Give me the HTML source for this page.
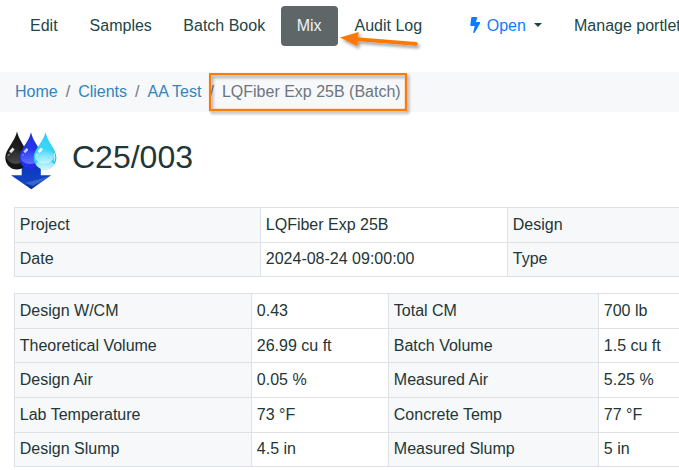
<!DOCTYPE html>
<html><head><meta charset="utf-8">
<style>
*{box-sizing:border-box;margin:0;padding:0}
html,body{width:679px;height:470px;overflow:hidden;background:#fff}
body{font-family:"Liberation Sans",sans-serif;font-size:16px;line-height:24px;color:#233636;position:relative}
.nav{position:absolute;left:14px;top:6px;height:40px;display:flex;white-space:nowrap}
.nav a{display:block;padding:8px 16px;color:#224646;text-decoration:none;border-radius:4px;line-height:24px}
.nav a.active{background:#5e6667;color:#f1f3f5}
.open{position:absolute;left:469px;top:6px;height:40px;display:flex;align-items:center;white-space:nowrap;color:#0f7bff}
.caret{position:absolute;left:534px;top:23px;width:0;height:0;border-left:4px solid transparent;border-right:4px solid transparent;border-top:4px solid #1e4646}
.manage{position:absolute;left:574px;top:14px;color:#224646;white-space:nowrap}
.bc{position:absolute;left:0;top:72px;width:679px;height:40px;background:#f7f8fa;padding:8px 15px;white-space:nowrap}
.bc a{color:#3085bf;text-decoration:none}
.bc .sep{color:#6c757d;padding:0 8px}
.bc .act{color:#6c757d}
h2{position:absolute;left:72px;top:138px;font-size:32px;line-height:38px;font-weight:400;color:#233636;white-space:nowrap}
table{position:absolute;left:14px;border-collapse:collapse;white-space:nowrap;table-layout:fixed}
td{border:1px solid #dee2e6;padding:4.8px 4.8px;line-height:24px;height:34.6px}
td.l{background:#f7f8fa}
#t1{top:207px}
#t2{top:293px}
tr.r2 td{padding-top:5.8px;padding-bottom:3.8px}
tr.r4 td{height:35.2px}
tr.r5 td{height:34px;padding-top:3.4px;padding-bottom:4.6px}
</style></head><body>
<div class="nav">
<a>Edit</a><a>Samples</a><a style="margin-left:-0.5px">Batch Book</a><a class="active" style="margin-left:-0.5px">Mix</a><a style="margin-left:1px">Audit Log</a>
</div>
<div class="open">
<svg width="10.5" height="16" viewBox="0 0 320 512" style="margin-right:6.5px;margin-left:0.7px;position:relative;top:-1px"><path fill="#0f7bff" d="M296 160H180.6l42.6-129.8C227.2 15 215.7 0 200 0H56C44 0 33.800 8.900 32.200 20.800l-32 240C-1.700 275.200 9.500 288 24 288h118.700L96.600 482.500c-3.600 15.200 8 29.500 23.300 29.500 8.400 0 16.400-4.400 20.800-12l176-304c9.300-15.900-2.200-36-20.700-36z"/></svg><span>Open</span>
</div>
<div class="caret"></div>
<div class="manage">Manage portlets</div>

<div class="bc"><a>Home</a><span class="sep">/</span><a>Clients</a><span class="sep">/</span><a>AA Test</a><span class="sep">/</span><span class="act">LQFiber Exp 25B (Batch)</span></div>

<svg style="position:absolute;left:0;top:126px" width="64" height="68" viewBox="0 0 64 68">
<defs>
<radialGradient id="gk" cx="0.45" cy="0.55" r="0.6"><stop offset="0" stop-color="#262626"/><stop offset="0.7" stop-color="#151515"/><stop offset="1" stop-color="#000"/></radialGradient>
<radialGradient id="gb" cx="0.45" cy="0.55" r="0.6"><stop offset="0" stop-color="#2a3cf0"/><stop offset="0.7" stop-color="#2030e2"/><stop offset="1" stop-color="#1420b4"/></radialGradient>
<radialGradient id="gc" cx="0.45" cy="0.55" r="0.6"><stop offset="0" stop-color="#46daf8"/><stop offset="0.7" stop-color="#30d0f5"/><stop offset="1" stop-color="#18b8e2"/></radialGradient>
<linearGradient id="lk" x1="0" y1="0" x2="0" y2="1"><stop offset="0" stop-color="#555" stop-opacity="0"/><stop offset="0.55" stop-color="#444" stop-opacity="0.7"/><stop offset="1" stop-color="#4e4e4e"/></linearGradient>
<linearGradient id="lb" x1="0" y1="0" x2="0" y2="1"><stop offset="0" stop-color="#6070ff" stop-opacity="0"/><stop offset="0.55" stop-color="#5566ff" stop-opacity="0.7"/><stop offset="1" stop-color="#6474ff"/></linearGradient>
<linearGradient id="lc" x1="0" y1="0" x2="0" y2="1"><stop offset="0" stop-color="#b0f0fc" stop-opacity="0"/><stop offset="0.5" stop-color="#a8eefc" stop-opacity="0.75"/><stop offset="1" stop-color="#c4f5fd"/></linearGradient>
<linearGradient id="bc" x1="0" y1="0" x2="0" y2="1"><stop offset="0" stop-color="#d8f8ff" stop-opacity="0.5"/><stop offset="1" stop-color="#f0fdff"/></linearGradient>
<linearGradient id="ga" x1="0" y1="0" x2="0" y2="1"><stop offset="0" stop-color="#0836b4"/><stop offset="0.5" stop-color="#0f40c2"/><stop offset="0.75" stop-color="#1444c0"/><stop offset="1" stop-color="#04288c"/></linearGradient>
<clipPath id="ck"><path d="M17,5.6 C18.5,14.6 28.1,23.62 28.1,31.6 A11.4,12.0 0 0 1 5.299999999999999,31.6 C5.299999999999999,23.62 15.5,14.6 17,5.6 Z"/></clipPath>
<clipPath id="cb"><path d="M31,6.2 C32.5,15.2 42.1,23.82 42.1,31.8 A11.4,12.0 0 0 1 19.299999999999997,31.8 C19.299999999999997,23.82 29.5,15.2 31,6.2 Z"/></clipPath>
<clipPath id="cc"><path d="M45.5,6.2 C47.0,15.2 56.4,23.419999999999998 56.4,31.4 A11.4,12.0 0 0 1 33.6,31.4 C33.6,23.419999999999998 44.0,15.2 45.5,6.2 Z"/></clipPath>
</defs>
<path d="M21.7,36 H40.8 V49.3 H51.2 L31.3,63.3 L11,49.3 H21.7 Z" fill="url(#ga)"/>
<path d="M25,57 Q37,54 49,50.5 L33,60 Z" fill="#6a8ee0" opacity="0.45"/>
<path d="M17,5.6 C18.5,14.6 28.1,23.62 28.1,31.6 A11.4,12.0 0 0 1 5.299999999999999,31.6 C5.299999999999999,23.62 15.5,14.6 17,5.6 Z" fill="url(#gk)"/>
<g clip-path="url(#ck)"><ellipse cx="16.099999999999998" cy="30.8" rx="9.576" ry="7.0680000000000005" fill="url(#lk)"/></g>
<path d="M9.14,25.3 L12.44,21.56 L14.64,23.43 L11.23,27.17 Z" fill="#e4e4e4" opacity="1"/><path d="M7.379999999999999,29.259999999999998 L9.14,27.72 L10.02,28.6 L8.26,30.14 Z" fill="#e4e4e4" opacity="0.45"/>
<path d="M31,6.2 C32.5,15.2 42.1,23.82 42.1,31.8 A11.4,12.0 0 0 1 19.299999999999997,31.8 C19.299999999999997,23.82 29.5,15.2 31,6.2 Z" fill="url(#gb)"/>
<g clip-path="url(#cb)"><ellipse cx="30.099999999999998" cy="31.0" rx="9.576" ry="7.0680000000000005" fill="url(#lb)"/></g>
<path d="M23.4,25.5 L26.4,22.1 L28.4,23.8 L25.3,27.2 Z" fill="#c8d0ff" opacity="1"/><path d="M21.8,29.1 L23.4,27.7 L24.2,28.5 L22.6,29.9 Z" fill="#c8d0ff" opacity="0.45"/>
<path d="M45.5,6.2 C47.0,15.2 56.4,23.419999999999998 56.4,31.4 A11.4,12.0 0 0 1 33.6,31.4 C33.6,23.419999999999998 44.0,15.2 45.5,6.2 Z" fill="url(#gc)"/>
<g clip-path="url(#cc)"><ellipse cx="45" cy="40.4" rx="10.26" ry="5.7" fill="url(#bc)"/><ellipse cx="44.4" cy="30.599999999999998" rx="9.576" ry="7.0680000000000005" fill="url(#lc)"/></g>
<path d="M37.67,25.25 L40.82,21.68 L42.92,23.465 L39.665,27.035 Z" fill="#ffffff" opacity="1"/><path d="M35.989999999999995,29.03 L37.67,27.56 L38.51,28.4 L36.83,29.87 Z" fill="#ffffff" opacity="0.45"/>
<path d="M54,27 Q55.4,31 54.2,35.5" stroke="#f0fcff" stroke-width="0.9" fill="none"/>
</svg>
<h2>C25/003</h2>

<table id="t1" style="width:800px"><colgroup><col style="width:246px"><col style="width:247px"><col style="width:307px"></colgroup>
<tr><td class="l">Project</td><td>LQFiber Exp 25B</td><td class="l">Design</td></tr>
<tr><td class="l">Date</td><td>2024-08-24 09:00:00</td><td class="l">Type</td></tr>
</table>
<table id="t2" style="width:800px"><colgroup><col style="width:237px"><col style="width:137px"><col style="width:210px"><col style="width:216px"></colgroup>
<tr><td class="l">Design W/CM</td><td>0.43</td><td class="l">Total CM</td><td>700 lb</td></tr>
<tr class="r2"><td class="l">Theoretical Volume</td><td>26.99 cu ft</td><td class="l">Batch Volume</td><td>1.5 cu ft</td></tr>
<tr><td class="l">Design Air</td><td>0.05 %</td><td class="l">Measured Air</td><td>5.25 %</td></tr>
<tr class="r4"><td class="l">Lab Temperature</td><td>73 °F</td><td class="l">Concrete Temp</td><td>77 °F</td></tr>
<tr class="r5"><td class="l">Design Slump</td><td>4.5 in</td><td class="l">Measured Slump</td><td>5 in</td></tr>
</table>
<svg style="position:absolute;left:0;top:0" width="679" height="470" viewBox="0 0 679 470">
<defs><filter id="sh" x="-20%" y="-50%" width="140%" height="200%"><feDropShadow dx="2" dy="2.5" stdDeviation="1.7" flood-color="#000" flood-opacity="0.38"/></filter></defs>
<g filter="url(#sh)">
<rect x="210" y="74.1" width="195.9" height="35.8" fill="none" stroke="#ff7800" stroke-width="2.1"/>
<path d="M340,37.4 L358.7,32.1 L357.2,46.3 Z" fill="#ff7800"/><line x1="356" x2="415.8" y1="39.15" y2="43.9" stroke="#ff7800" stroke-width="3.9" stroke-linecap="round"/>
</g>
</svg>
</body></html>
